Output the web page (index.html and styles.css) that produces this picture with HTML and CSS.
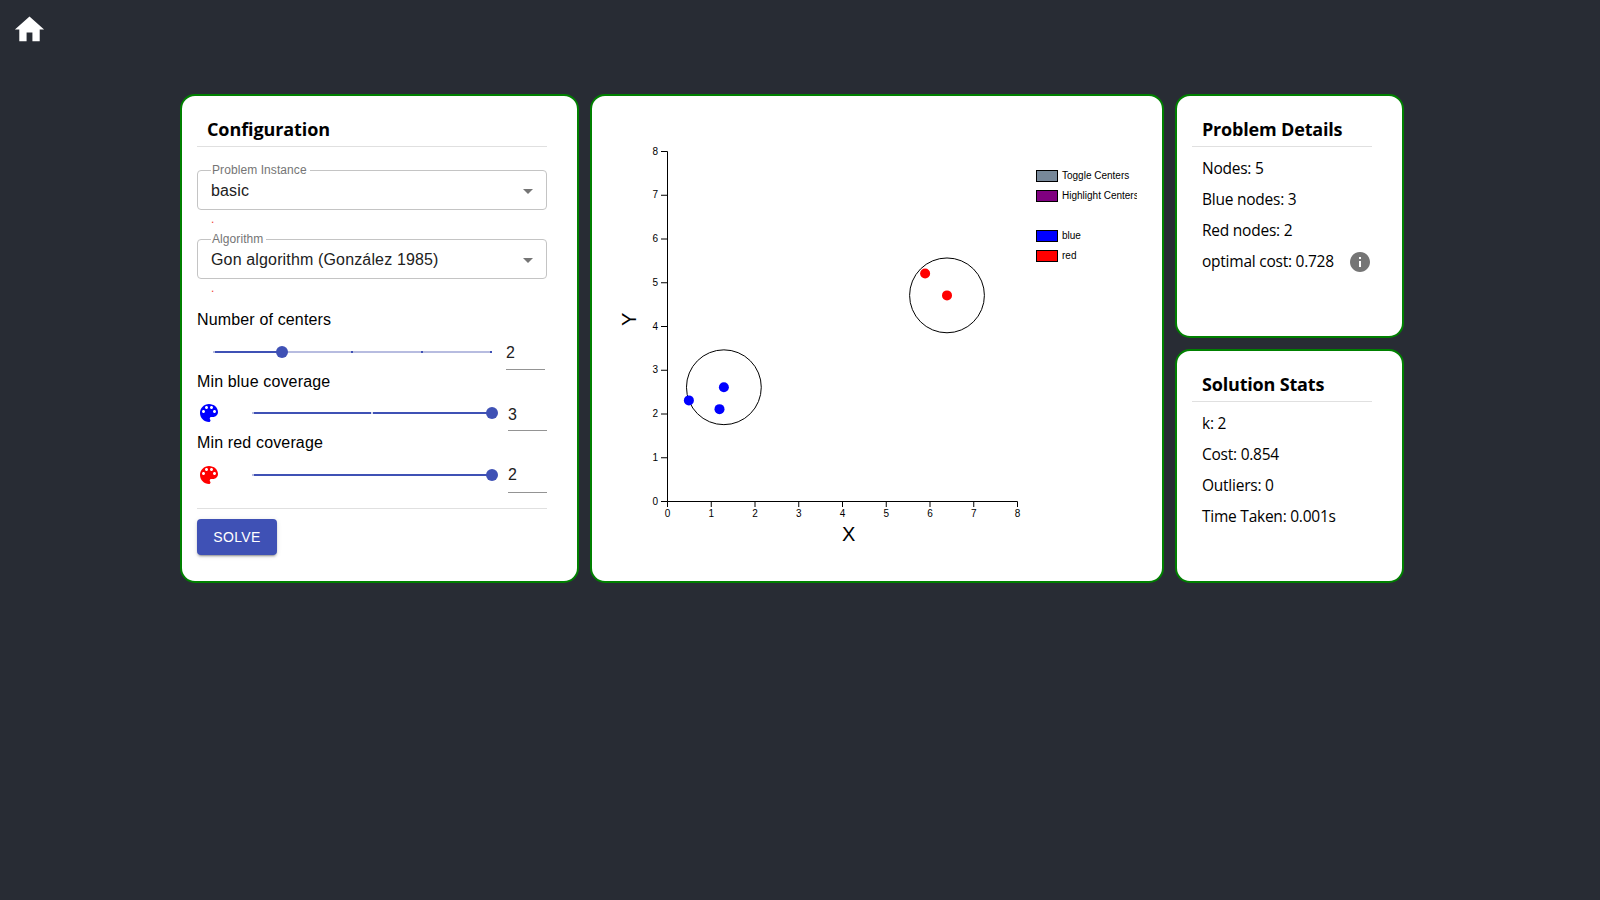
FILE: index.html
```html
<!DOCTYPE html>
<html lang="en">
<head>
<meta charset="utf-8">
<title>k-center solver</title>
<link rel="stylesheet" href="styles.css">
</head>
<body>
<header class="topbar">
  <svg class="home" viewBox="0 0 24 24"><path d="M10 20v-6h4v6h5v-8h3L12 3 2 12h3v8z"/></svg>
</header>
<main class="layout">
  <section class="card config">
    <h3 class="card-title">Configuration</h3>
    <div class="field">
      <fieldset class="select"><legend>Problem Instance</legend><span class="select-value">basic</span><svg class="arrow" viewBox="0 0 24 24"><path d="M7 10l5 5 5-5z"/></svg></fieldset>
      <p class="helper">.</p>
    </div>
    <div class="field">
      <fieldset class="select"><legend>Algorithm</legend><span class="select-value">Gon algorithm (González 1985)</span><svg class="arrow" viewBox="0 0 24 24"><path d="M7 10l5 5 5-5z"/></svg></fieldset>
      <p class="helper">.</p>
    </div>
    <div class="control">
      <div class="control-label">Number of centers</div>
      <div class="control-row centers">
        <div class="slider"><i class="track part"></i><i class="mark m0"></i><i class="mark m50"></i><i class="mark m75"></i><i class="mark m100"></i><b class="thumb quarter"></b></div>
        <div class="number low">2</div>
      </div>
    </div>
    <div class="control short">
      <div class="control-label">Min blue coverage</div>
      <div class="control-row coverage">
        <svg class="palette blue" viewBox="0 0 24 24"><path d="M12 3c-4.97 0-9 4.03-9 9s4.03 9 9 9c.83 0 1.5-.67 1.5-1.5 0-.39-.15-.74-.39-1.01-.23-.26-.38-.61-.38-.99 0-.83.67-1.5 1.5-1.5H16c2.76 0 5-2.24 5-5 0-4.42-4.03-8-9-8zm-5.5 9c-.83 0-1.5-.67-1.5-1.5S5.67 9 6.5 9 8 9.67 8 10.5 7.33 12 6.5 12zm3-4C8.67 8 8 7.33 8 6.5S8.67 5 9.5 5s1.5.67 1.5 1.5S10.33 8 9.5 8zm5 0c-.83 0-1.5-.67-1.5-1.5S13.67 5 14.5 5s1.5.67 1.5 1.5S15.33 8 14.5 8zm3 4c-.83 0-1.5-.67-1.5-1.5S16.67 9 17.5 9s1.5.67 1.5 1.5-.67 1.5-1.5 1.5z"/></svg>
        <div class="slider"><i class="track"></i><i class="mark m0"></i><i class="mark m50 pale"></i><b class="thumb"></b></div>
        <div class="number low">3</div>
      </div>
    </div>
    <div class="control">
      <div class="control-label">Min red coverage</div>
      <div class="control-row coverage">
        <svg class="palette red" viewBox="0 0 24 24"><path d="M12 3c-4.97 0-9 4.03-9 9s4.03 9 9 9c.83 0 1.5-.67 1.5-1.5 0-.39-.15-.74-.39-1.01-.23-.26-.38-.61-.38-.99 0-.83.67-1.5 1.5-1.5H16c2.76 0 5-2.24 5-5 0-4.42-4.03-8-9-8zm-5.5 9c-.83 0-1.5-.67-1.5-1.5S5.67 9 6.5 9 8 9.67 8 10.5 7.33 12 6.5 12zm3-4C8.67 8 8 7.33 8 6.5S8.67 5 9.5 5s1.5.67 1.5 1.5S10.33 8 9.5 8zm5 0c-.83 0-1.5-.67-1.5-1.5S13.67 5 14.5 5s1.5.67 1.5 1.5S15.33 8 14.5 8zm3 4c-.83 0-1.5-.67-1.5-1.5S16.67 9 17.5 9s1.5.67 1.5 1.5-.67 1.5-1.5 1.5z"/></svg>
        <div class="slider"><i class="track"></i><i class="mark m0"></i><b class="thumb"></b></div>
        <div class="number">2</div>
      </div>
    </div>
    <hr class="divider">
    <button class="solve">SOLVE</button>
  </section>

  <section class="card plot">
    <svg class="chart" width="530" height="455">
      <g transform="translate(60,40)">
        <g class="axis">
          <path d="M-6 .5H.5V350.5H-6"/>
          <path d="M-6 44.25H0M-6 88H0M-6 131.75H0M-6 175.5H0M-6 219.25H0M-6 263H0M-6 306.75H0"/>
          <path d="M.5 356V350.5H350.5V356"/>
          <path d="M44.25 350V356M88 350V356M131.75 350V356M175.5 350V356M219.25 350V356M263 350V356M306.75 350V356"/>
        </g>
        <g class="ticks y-ticks">
          <text x="-9" y="3.7">8</text><text x="-9" y="47.4">7</text><text x="-9" y="91.2">6</text><text x="-9" y="135">5</text><text x="-9" y="178.7">4</text><text x="-9" y="222.4">3</text><text x="-9" y="266.2">2</text><text x="-9" y="310">1</text><text x="-9" y="353.7">0</text>
        </g>
        <g class="ticks x-ticks">
          <text x=".5" y="366">0</text><text x="44.25" y="366">1</text><text x="88" y="366">2</text><text x="131.75" y="366">3</text><text x="175.5" y="366">4</text><text x="219.25" y="366">5</text><text x="263" y="366">6</text><text x="306.75" y="366">7</text><text x="350.5" y="366">8</text>
        </g>
        <text class="axis-name" x="175" y="390">X</text>
        <text class="axis-name" transform="translate(-31,175) rotate(-90)">Y</text>
        <g class="cover"><circle cx="56.875" cy="236.25" r="37.4"/><circle cx="280" cy="144.375" r="37.4"/></g>
        <g class="blue"><circle cx="56.875" cy="236.25" r="5"/><circle cx="21.875" cy="249.375" r="5"/><circle cx="52.5" cy="258.125" r="5"/></g>
        <g class="red"><circle cx="258.125" cy="122.5" r="5"/><circle cx="280" cy="144.375" r="5"/></g>
        <g class="legend">
          <rect class="slate" x="369.5" y="19.5" width="21" height="11"/><text x="395" y="28">Toggle Centers</text>
          <rect class="purple" x="369.5" y="39.5" width="21" height="11"/><text x="395" y="48">Highlight Centers</text>
          <rect class="blue" x="369.5" y="79.5" width="21" height="11"/><text x="395" y="88">blue</text>
          <rect class="red" x="369.5" y="99.5" width="21" height="11"/><text x="395" y="108">red</text>
        </g>
      </g>
    </svg>
  </section>

  <div class="side">
    <section class="card details">
      <h3 class="card-title">Problem Details</h3>
      <div class="stats">
        <div>Nodes: 5</div>
        <div>Blue nodes: 3</div>
        <div>Red nodes: 2</div>
        <div class="with-info"><span>optimal cost: 0.728</span><svg class="info" viewBox="0 0 24 24"><path d="M12 2C6.48 2 2 6.48 2 12s4.48 10 10 10 10-4.48 10-10S17.52 2 12 2zm1 15h-2v-6h2v6zm0-8h-2V7h2v2z"/></svg></div>
      </div>
    </section>
    <section class="card solution">
      <h3 class="card-title">Solution Stats</h3>
      <div class="stats">
        <div>k: 2</div>
        <div>Cost: 0.854</div>
        <div>Outliers: 0</div>
        <div>Time Taken: 0.001s</div>
      </div>
    </section>
  </div>
</main>
</body>
</html>
```
FILE: styles.css
```css
* { box-sizing: border-box; }
body { margin: 0; min-height: 100vh; background: #282c34; font-family: "Liberation Sans", Arial, sans-serif; font-size: 16px; color: #000; }
svg { display: block; flex: none; }
.topbar { height: 94px; padding: 12px; }
.home { width: 35px; height: 35px; fill: #fff; }
.layout { display: grid; grid-template-columns: 399px 574px 229px; gap: 11px; padding-left: 180px; height: 489px; }
.card { background: #fff; border: 2px solid green; border-radius: 15px; padding: 15px; min-width: 0; }
.config { padding-right: 30px; }
.side { display: grid; grid-template-rows: 244px 234px; gap: 11px; }
.side .card { padding-right: 30px; }
.card-title { margin: 0; height: 36px; padding-left: 10px; border-bottom: 1px solid #e0e0e0; font: 700 18px/37px "Open Sans", "Noto Sans", sans-serif; letter-spacing: -0.1px; white-space: nowrap; }
.side .card-title { letter-spacing: -.18px; }

.field { display: flow-root; height: 69px; }
.card-title + .field { margin-top: 23px; }
.select { height: 45px; margin: -5px 0 0; padding: 0 8px 4px; border: 1px solid #c4c4c4; border-radius: 4px; display: flex; align-items: center; min-width: 0; }
.select legend { margin-left: 5px; padding: 0 3px 0 1px; height: 11px; font-size: 12px; line-height: 10px; letter-spacing: .08px; color: #757575; }
.select-value { flex: 1; padding-left: 5px; line-height: 24px; letter-spacing: .15px; color: #212121; }
.arrow { width: 24px; height: 24px; margin-right: -2px; fill: #757575; }
.helper { margin: 3px 14px 0; font-size: 12px; line-height: 13px; color: #f44336; }

.control { height: 62px; }
.control.short { height: 61px; }
.control-label { height: 24px; line-height: 24px; letter-spacing: .15px; }
.control-row { display: flex; }
.centers { padding: 0 2px 0 16px; }
.slider { position: relative; flex: 1; height: 2px; margin-top: 19px; background: #b7bce0; }
.short .slider { margin-top: 18px; }
.track { position: absolute; left: 0; top: 0; width: 100%; height: 2px; background: #3f51b5; }
.track.part { width: 25%; }
.mark { position: absolute; top: 0; width: 2px; height: 2px; background: #3f51b5; }
.m0 { left: 0; background: #b7bce0; }
.m50 { left: calc(50% - 1px); }
.m75 { left: 75%; }
.m100 { left: 100%; }
.pale { background: #d9dcf0; }
.thumb { position: absolute; left: 100%; top: -5px; width: 12px; height: 12px; margin-left: -6px; border-radius: 50%; background: #3f51b5; }
.thumb.quarter { left: 25%; }
.number { width: 39px; height: 38px; margin-left: 16px; padding-top: 8px; line-height: 24px; border-bottom: 1px solid #949494; color: #212121; }
.number.low { padding-top: 9px; }
.short .number { height: 37px; }
.palette { width: 24px; height: 24px; margin: 8px 31px 0 0; }
.short .palette { margin-top: 7px; }
.divider { height: 1px; margin: 15px 0 10px; border: 0; background: #e0e0e0; }
.solve { display: block; width: 80px; height: 36px; padding: 0; border: 0; border-radius: 4px; background: #3f51b5; color: #fff; font: 500 14px/24px "Liberation Sans", Arial, sans-serif; letter-spacing: .4px; box-shadow: 0 3px 1px -2px rgba(0,0,0,.2), 0 2px 2px rgba(0,0,0,.14), 0 1px 5px rgba(0,0,0,.12); }

.blue { fill: #00f; }
.red { fill: #f00; }
.slate { fill: #778899; }
.purple { fill: purple; }
.axis path, .cover circle { fill: none; stroke: #000; }
.ticks, .legend text { font-size: 10px; fill: #000; }
.y-ticks { text-anchor: end; }
.x-ticks { text-anchor: middle; }
.axis-name { font-size: 20px; }
.legend rect { stroke: #000; }

.stats { padding: 6px 0 0 10px; font: 15.5px/31px "Open Sans", "Noto Sans", sans-serif; letter-spacing: -.24px; white-space: nowrap; }
.stats div { height: 31px; }
.with-info { display: flex; align-items: center; justify-content: space-between; }
.info { width: 24px; height: 24px; fill: #757575; }
```
